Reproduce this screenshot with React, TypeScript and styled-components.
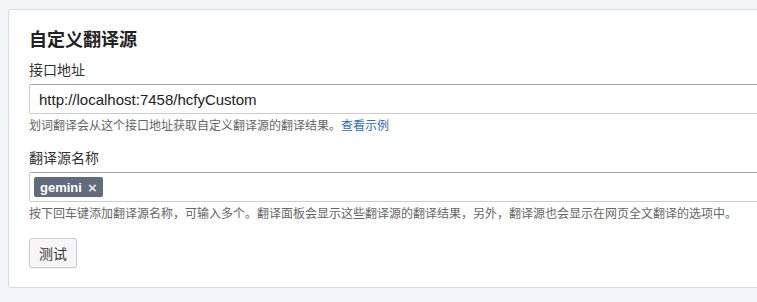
import React, { useState } from 'react'
import styled, { createGlobalStyle } from 'styled-components'

const GlobalStyle = createGlobalStyle`
  html, body {
    margin: 0;
    padding: 0;
    background: #f4f5f7;
    overflow: hidden;
  }
  body {
    font-family: 'Liberation Sans', 'Noto Sans CJK SC', sans-serif;
    color: #333;
  }
`

const Page = styled.div`
  padding: 9px 0 0 8px;
`

const Card = styled.section`
  width: 800px;
  box-sizing: border-box;
  background: #fff;
  border: 1px solid #d9dbde;
  border-radius: 3px;
  padding: 18px 20px 19px 20px;
`

const Title = styled.h3`
  margin: 0 0 8px;
  font-size: 18px;
  line-height: 24px;
  font-weight: 600;
  color: #222;
`

const Label = styled.div<{ $gap?: number }>`
  margin-top: ${p => p.$gap || 0}px;
  font-size: 14px;
  line-height: 20px;
  color: #333;
`

const Field = styled.div`
  margin-top: 4px;
  box-sizing: border-box;
  width: 100%;
  height: 30px;
  border: 1px solid #cdcdcd;
  border-top-color: #a3a3a3;
  border-radius: 2px;
  background: #fff;
  display: flex;
  align-items: center;
`

const TextInput = styled.input`
  flex: 1;
  border: 0;
  outline: none;
  background: transparent;
  padding: 0 9px;
  font-family: 'Liberation Sans', 'Noto Sans CJK SC', sans-serif;
  font-size: 15px;
  color: #222;
`

const TagBox = styled(Field)`
  padding: 0 4px;
  gap: 4px;
`

const Tag = styled.span`
  display: inline-flex;
  align-items: center;
  gap: 6px;
  height: 20px;
  padding: 0 6px;
  border-radius: 2px;
  background: #606b7b;
  color: #fff;
  font-size: 13px;
  font-weight: 700;
`

const TagClose = styled.span`
  font-size: 15px;
  font-weight: 700;
  color: #dfe3e8;
  line-height: 1;
  cursor: pointer;
`

const Help = styled.p`
  margin: 3px 0 0;
  font-size: 12px;
  line-height: 18px;
  color: #666;
`

const Link = styled.a`
  color: #2a6cc4;
  text-decoration: none;
`

const Button = styled.button`
  margin-top: 15px;
  height: 30px;
  padding: 0 9px;
  border: 1px solid #cbcbcb;
  border-radius: 3px;
  background: #f6f6f6;
  box-shadow: 0 1px 0 rgba(0, 0, 0, 0.05);
  font-family: 'Liberation Sans', 'Noto Sans CJK SC', sans-serif;
  font-size: 14px;
  color: #333;
  cursor: pointer;
`

export default function App () {
  const [url, setUrl] = useState('http://localhost:7458/hcfyCustom')
  const [names, setNames] = useState(['gemini'])

  return (
    <Page>
      <GlobalStyle />
      <Card>
        <Title>自定义翻译源</Title>
        <Label>接口地址</Label>
        <Field>
          <TextInput value={url} onChange={e => setUrl(e.target.value)} />
        </Field>
        <Help>
          划词翻译会从这个接口地址获取自定义翻译源的翻译结果。<Link href='#'>查看示例</Link>
        </Help>
        <Label $gap={13}>翻译源名称</Label>
        <TagBox>
          {names.map(name => (
            <Tag key={name}>
              {name}
              <TagClose onClick={() => setNames(names.filter(n => n !== name))}>×</TagClose>
            </Tag>
          ))}
        </TagBox>
        <Help>
          按下回车键添加翻译源名称，可输入多个。翻译面板会显示这些翻译源的翻译结果，另外，翻译源也会显示在网页全文翻译的选项中。
        </Help>
        <Button>测试</Button>
      </Card>
    </Page>
  )
}
